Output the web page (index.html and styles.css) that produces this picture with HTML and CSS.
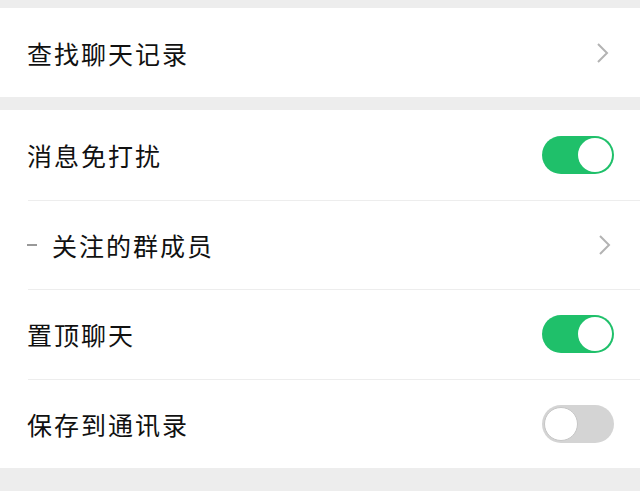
FILE: index.html
```html
<!DOCTYPE html>
<html lang="zh">
<head>
<meta charset="utf-8">
<link rel="stylesheet" href="styles.css">
</head>
<body>
<div class="page">
  <div class="group first">
    <div class="row">
      <span class="label">查找聊天记录</span>
      <svg class="chev" width="14" height="22" viewBox="0 0 14 22"><path d="M2 2 L11 11 L2 20" fill="none" stroke="#b3b3b3" stroke-width="2"/></svg>
    </div>
  </div>
  <div class="group">
    <div class="row">
      <span class="label">消息免打扰</span>
      <span class="switch on"><span class="knob"></span></span>
    </div>
    <div class="row">
      <span class="label"><span class="dash"></span>关注的群成员</span>
      <svg class="chev" width="14" height="22" viewBox="0 0 14 22"><path d="M2 2 L11 11 L2 20" fill="none" stroke="#b3b3b3" stroke-width="2"/></svg>
    </div>
    <div class="row">
      <span class="label">置顶聊天</span>
      <span class="switch on"><span class="knob"></span></span>
    </div>
    <div class="row">
      <span class="label">保存到通讯录</span>
      <span class="switch off"><span class="knob"></span></span>
    </div>
  </div>
</div>
</body>
</html>
```
FILE: styles.css
```css
html, body {
  margin: 0;
  padding: 0;
  background: #ededed;
}
.page {
  width: 640px;
  height: 491px;
  padding-top: 8px;
  box-sizing: border-box;
  font-family: "Noto Sans CJK SC", "Noto Sans", sans-serif;
  color: #111;
}
.group {
  background: #fff;
  margin-bottom: 13px;
  padding-left: 28px;
}
.row {
  height: 89.5px;
  display: flex;
  align-items: center;
  justify-content: space-between;
  padding-right: 26px;
  border-top: 1px solid #ededed;
  box-sizing: border-box;
}
.row:first-child {
  border-top: none;
}
.first .row {
  height: 89px;
  padding-right: 28px;
}
.label {
  font-size: 25px;
  letter-spacing: 2px;
  margin-left: -1px;
  display: flex;
  align-items: center;
}
.dash {
  display: inline-block;
  width: 10px;
  height: 1.5px;
  background: #999;
  margin-right: 15px;
}
.chev {
  margin-right: 2px;
}
.switch {
  width: 72px;
  height: 38px;
  border-radius: 19px;
  box-sizing: border-box;
  position: relative;
  display: block;
}
.switch.on {
  background: #1fc06a;
}
.switch.off {
  background: #d4d4d4;
}
.knob {
  position: absolute;
  top: 2px;
  width: 34px;
  height: 34px;
  border-radius: 50%;
  background: #fff;
  box-sizing: border-box;
}
.on .knob {
  right: 2px;
}
.off .knob {
  left: 2px;
  border: 1px solid #c6c6c6;
}
```
